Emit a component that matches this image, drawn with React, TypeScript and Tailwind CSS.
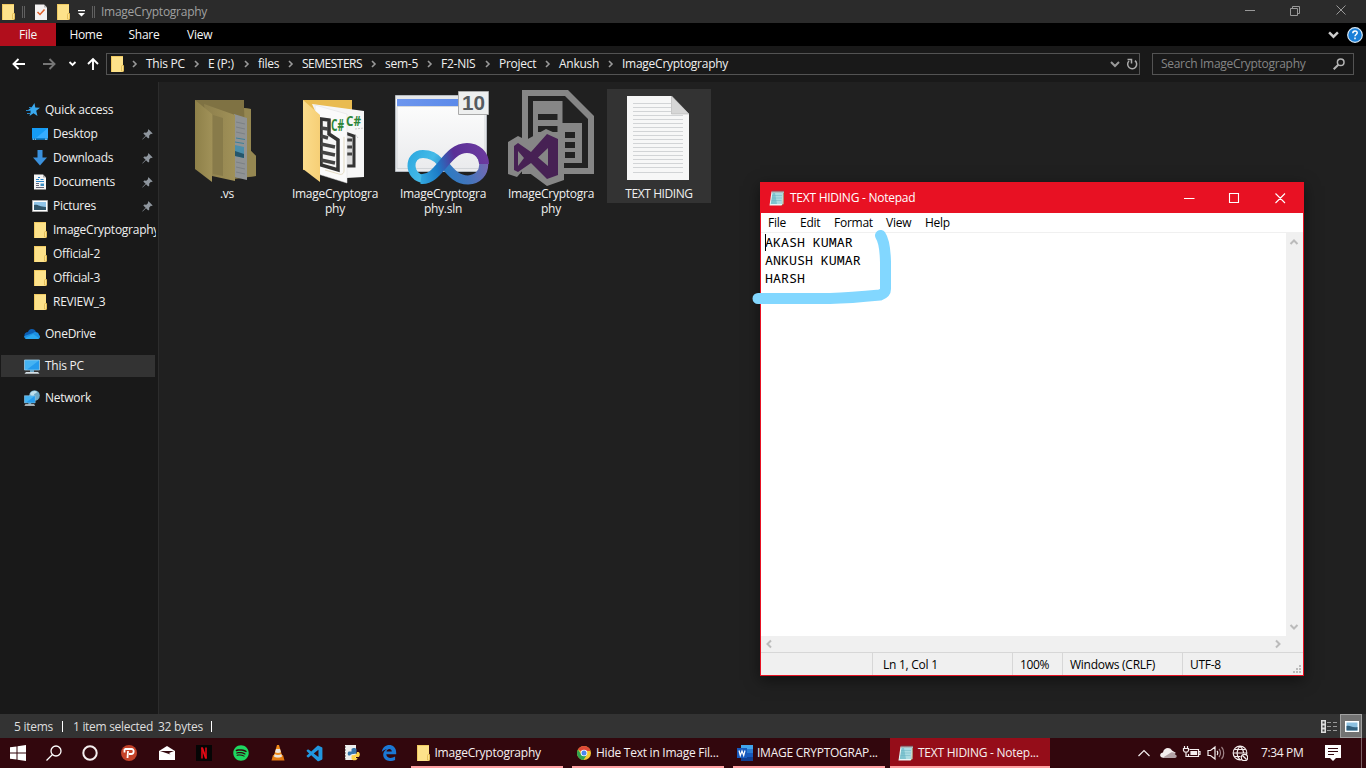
import type { ReactNode } from "react";
import { FaSpotify } from "react-icons/fa";
import { BiLogoVisualStudio } from "react-icons/bi";

function Folder({ className = "" }: { className?: string }) {
  return (
    <svg className={`h-4 w-[13px] shrink-0 ${className}`} viewBox="0 0 13 16">
      <path d="M0 0h12v16H0z" fill="#fde28a" />
      <path d="M0 0h12v1H1v15H0z" fill="#f0ca62" />
      <path d="M0 15h13V9.500l-1.500-.5-1.200 1.800V15z" fill="#f5cf60" />
      <path d="M10.500 15v-4.500l1-1.500 1 1v5.500z" fill="#fbe394" stroke="#d9ad3f" strokeWidth=".6" />
    </svg>
  );
}

function Chevron({ className = "", d, w = 1.300 }: { className?: string; d: string; w?: number }) {
  return (
    <svg className={`shrink-0 ${className}`} viewBox="0 0 10 10" fill="none" stroke="currentColor" strokeWidth={w}>
      <path d={d} />
    </svg>
  );
}

const DOWN = "M1 3l4 4 4-4";

function NotepadIcon() {
  return (
    <svg className="h-4 w-4 shrink-0" viewBox="0 0 16 16">
      <path d="M2.500 1.500h12.500l-.5 12.500-2 1.500H.5z" fill="#e8f4f4" />
      <path d="M3.500 3h10l-.8 11H1.700z" fill="#7fc4d0" />
      <path d="M6 3h7.500l-.8 11H8z" fill="#a9dbe2" />
      <path d="M3 5.500h10M3 8h10M2.500 10.500h10" stroke="#6bb3c2" strokeWidth=".5" />
      <path d="M4 .5v2.500M6 .5v2.500M8 .5v2.500M10 .5v2.500M12 .5v2.500M14 .5v2.500" stroke="#4f6a70" strokeWidth=".8" />
      <path d="M14.500 3l-.5 11-1.500 1.500" stroke="#8b7b50" strokeWidth=".8" fill="none" />
    </svg>
  );
}

function Pin() {
  return (
    <svg className="h-[11px] w-[11px]" viewBox="0 0 11 11" fill="#8f969e">
      <path d="M6.500.3 10.700 4.500l-1.200.5-.6-.2-1.800 1.900.2 1.900-1 1L4 7.200.7 10.600l-.5-.4L3.600 6.800 1.300 4.600l1-1 2 .2 1.800-1.900-.2-.8z" />
    </svg>
  );
}

const crumbs: [string, string][] = [
  ["This PC", "w-[62px]"],
  ["E (P:)", "w-[50px]"],
  ["files", "w-[44px]"],
  ["SEMESTERS", "w-[83px] tracking-[-0.5px]"],
  ["sem-5", "w-[56px]"],
  ["F2-NIS", "w-[58px]"],
  ["Project", "w-[60px]"],
  ["Ankush", "w-[63px]"],
];

function TitleBar() {
  return (
    <div className="flex h-[23px] items-center bg-[#2b2b2b] pl-[2px] text-[#a0a0a0]">
      <Folder />
      <div className="ml-[7px] h-3 w-[3px] border-x border-[#606060]" />
      <svg className="ml-[10px] h-4 w-3" viewBox="0 0 12 16">
        <path d="M0 .5h9l3 3V16H0z" fill="#f4f2f2" />
        <path d="M9 .5v3h3" fill="#bbb" />
        <path d="m2.500 8 2.500 2.500L9.500 5.500" stroke="#e0602a" strokeWidth="1.500" fill="none" />
      </svg>
      <Folder className="ml-[10px]" />
      <svg className="ml-2 mt-[3px] h-[7px] w-[7px]" viewBox="0 0 7 7" fill="#fff"><path d="M0 0h7v1.200H0zM0 3h7L3.500 6.500z" /></svg>
      <div className="ml-[7px] h-3 w-[3px] border-x border-[#606060]" />
      <span className="ml-[6px]">ImageCryptography</span>
      <svg className="ml-auto mb-[3px] mr-[19px] h-3 w-[102px]" viewBox="0 0 102 12" fill="none" stroke="#999">
        <path d="M0 6.500h10M45.500 4.500h7v7h-7zM47.500 4V2.500h7v7H53M91.500 1.500l9 9M100.500 1.500l-9 9" />
      </svg>
    </div>
  );
}

function Ribbon() {
  return (
    <div className="flex h-[23px] items-center bg-black text-[#f5f5f5]">
      <div className="flex h-full w-14 items-center justify-center bg-[#b10e1c]">File</div>
      <span className="w-[59px] pl-[13.500px] tracking-[-0.35px]">Home</span>
      <span className="w-[58px] pl-[13.500px]">Share</span>
      <span className="pl-[14px]">View</span>
      <Chevron d={DOWN} w={2.200} className="ml-auto h-[11px] w-[11px] text-[#ccc]" />
      <svg className="ml-2 mr-[3px] h-4 w-4" viewBox="0 0 16 16">
        <circle cx="8" cy="8" r="7.300" fill="#1a7fd8" stroke="#d5e7f5" strokeWidth="1.200" />
        <path d="M5.800 6.300c0-3.200 4.400-3 4.400-.5C10.200 7.500 8 7.500 8 9.300M8 10.600v1.700" stroke="#fff" strokeWidth="1.500" fill="none" />
      </svg>
    </div>
  );
}

function AddressRow() {
  return (
    <div className="flex h-9 items-center bg-[#191919] text-[#f0f0f0]">
      <svg className="h-4 w-[106px] shrink-0" viewBox="0 0 106 16" fill="none" strokeWidth="1.900" stroke="#fff">
        <path d="M13.500 8H25M18.500 3l-5 5 5 5" />
        <path d="M43 8h11.500M49.500 3l5 5-5 5" stroke="#777" />
        <path d="m69.500 6 3 3 3-3" strokeWidth="1.800" />
        <path d="M93 14V3M88 8l5-5 5 5" />
      </svg>
      <div className="flex h-[22px] w-[1034px] items-center border border-[#535353] pl-1">
        <Folder />
        <Chevron className="ml-[6px] mr-[6px] h-[10px] w-[10px] text-[#999]" d="M3 2l3 3-3 3" w={1.600} />
        {crumbs.map(([name, cls]) => (
          <div key={name} className={`flex shrink-0 items-center justify-between whitespace-nowrap pr-[6px] ${cls}`}>
            {name}
            <Chevron className="h-[10px] w-[10px] text-[#999]" d="M3 2l3 3-3 3" w={1.600} />
          </div>
        ))}
        <span>ImageCryptography</span>
        <Chevron d={DOWN} w={2} className="ml-auto h-[10px] w-[10px] text-[#999]" />
        <svg className="ml-[6px] mr-[1px] h-3 w-3" viewBox="0 0 12 12" fill="none" stroke="#aaa" strokeWidth="1.500">
          <path d="M9 2.700A4.500 4.500 0 1 1 3 3M1.500 1.500h4v4" />
        </svg>
      </div>
      <div className="ml-3 flex h-[22px] w-[202px] items-center border border-[#535353] pl-2 text-[#858585] tracking-[-0.3px]">
        Search ImageCryptography
        <svg className="ml-auto mr-2 h-3 w-3" viewBox="0 0 12 12" fill="none" stroke="#b5b5b5">
          <circle cx="7.700" cy="4.300" r="3.300" strokeWidth="1.500" />
          <path d="M5.300 6.700.7 11.300" strokeWidth="2" />
        </svg>
      </div>
    </div>
  );
}

function SideRow({ icon, label, pinned, className = "" }: { icon: ReactNode; label: string; pinned?: boolean; className?: string }) {
  return (
    <div className={`flex h-6 w-[156px] items-center overflow-hidden whitespace-nowrap ${className}`}>
      <span className="mr-[5px] flex w-4 shrink-0 justify-center">{icon}</span>
      <span>{label}</span>
      {pinned && <span className="ml-auto mr-[3px]"><Pin /></span>}
    </div>
  );
}

function Monitor() {
  return (
    <>
      <path d="M.5 1h15v10H.5z" fill="#45b3f2" stroke="#9ac9e4" strokeWidth=".8" />
      <path d="M15 1.500v9H3z" fill="#259bed" />
      <path d="M6 11h4v2H6z" fill="#6da8c8" />
      <path d="M2 13h12l1.500 1.800H.5z" fill="#d5dfe5" />
    </>
  );
}

function Sidebar() {
  return (
    <aside className="flex w-[159px] shrink-0 flex-col border-r border-[#2c2c2c] bg-[#191919] pt-4 text-[#f0f0f0]">
      <SideRow className="pl-6" label="Quick access" icon={
        <svg className="ml-px h-[14px] w-[14px]" viewBox="0 0 14 14"><path d="m8.500 0 .8 4.500 4.700.2-3.800 3 1.300 5.300-4-2.700L3.500 13l1.300-4.500L2 7l3.500-2.500z" fill="#3aa9ee" /><path d="M3 4.500h3M0 7.500h5M1 10.500h3" stroke="#2586c9" strokeWidth="1.200" /></svg>
      } />
      <SideRow className="pl-8" label="Desktop" pinned icon={
        <svg className="h-4 w-4" viewBox="0 0 16 16"><path d="M0 2h16v12H0z" fill="#159cf5" /><path d="M16 2v10H4z" fill="#36adff" /><path d="M0 12.500h16V14H0z" fill="#0c67a5" /><path d="M1 13.200h1M3 13.200h1M13 13.200h2" stroke="#fff" strokeWidth=".7" /></svg>
      } />
      <SideRow className="pl-8" label="Downloads" pinned icon={
        <svg className="h-4 w-4" viewBox="0 0 16 16"><path d="M5.500 0h5v7.500H15L8 15.500 1 7.500h4.500z" fill="#3b91dd" /></svg>
      } />
      <SideRow className="pl-8" label="Documents" pinned icon={
        <svg className="h-4 w-4" viewBox="0 0 16 16"><path d="M2 .5h9L14 3.500V15.500H2z" fill="#f5f5f5" /><path d="M11 .5v3h3" fill="#aaa" /><path d="M6 3.500h2M4 5.500h3M8.500 5.500h3M4 7.500h8" stroke="#2b86c9" strokeWidth="1.200" /><path d="M4 9.500h3M4 11.500h3M4 13.500h8" stroke="#667" /><path d="M8.500 9.500h3.500v2.500H8.500z" fill="#3c8fc4" /></svg>
      } />
      <SideRow className="pl-8" label="Pictures" pinned icon={
        <svg className="h-4 w-4" viewBox="0 0 16 16"><path d="M.5 2.500h15v11H.5z" fill="#fff" stroke="#aaa" /><path d="M2 4h12v8H2z" fill="#91c5e9" /><path d="M2 7c4-1 5 2 12 2v3H2z" fill="#31566b" /></svg>
      } />
      {["ImageCryptography", "Official-2", "Official-3", "REVIEW_3"].map((n) => (
        <SideRow key={n} className="pl-8" label={n} icon={<Folder />} />
      ))}
      <SideRow className="mt-2 pl-6" label="OneDrive" icon={
        <svg className="h-4 w-4" viewBox="0 0 16 16"><path d="M4 6c1-4 7-4 8 .3L8 11 1 11C-.5 9 1 6 4 6z" fill="#0d5fb4" /><path d="M9 7c2-2 6-.5 6 2 2 1 1 4-1 4H3C1 13-.3 11.500.3 10z" fill="#1c8fe3" /><path d="M1 12.300 9 8l6 4c-.3.700-1 1-2 1H3c-1 0-1.500-.2-2-.7z" fill="#2ba8f0" /></svg>
      } />
      <div className="mt-2 flex h-6 items-center">
        <div className="ml-px flex h-[22px] w-[154px] items-center bg-[#333]">
          <SideRow className="pl-[23px]" label="This PC" icon={<svg className="mt-px h-4 w-4" viewBox="0 0 16 16"><Monitor /></svg>} />
        </div>
      </div>
      <SideRow className="mt-2 pl-6" label="Network" icon={
        <svg className="h-4 w-4" viewBox="0 0 16 16"><circle cx="10.500" cy="5.500" r="5.300" fill="#6fa9c6" /><path d="M6 4c2-4 6-3 7-2-1 2-3 1-3 3s-3 1-4-1z" fill="#bfe0ec" /><g transform="translate(0 5) scale(.72)"><Monitor /></g></svg>
      } />
    </aside>
  );
}

function VsFolderIcon() {
  return (
    <svg className="h-[97px] w-full" viewBox="175 89 104 97">
      <defs>
        <linearGradient id="dimFlap"><stop stopColor="#8e8049" /><stop offset="1" stopColor="#a09158" /></linearGradient>
        <linearGradient id="dimFlap2"><stop stopColor="#8d7f4c" /><stop offset="1" stopColor="#a09158" /></linearGradient>
      </defs>
      <path d="M195 100h49v8l7 1v42l5 5v20l-21 3-40-10z" fill="#7f7243" />
      <path d="M244 108l7 1v42l5 5v20l-9 1z" fill="#958751" />
      <path d="m234 114 13 4v62l-13-3z" fill="#909394" />
      <path d="m236 122 9 2M236 127l9 2M236 132l9 2M236 162l9 2M236 167l9 2M236 172l9 2" stroke="#71797d" strokeWidth=".7" />
      <path d="m236 138 9 1.500M235 142l9 1.500" stroke="#3d7f98" />
      <path d="m235 145 9 2v11l-9-2z" fill="#4c8eaa" /><path d="m235 151 9 3v4l-9-2z" fill="#25566b" />
      <path d="m204 104 31 11v66l-23-5z" fill="url(#dimFlap2)" />
      <path d="m213 115 10 3v58l-10-2z" fill="#887b4a" />
      <path d="m195 100 17 14v68l-17-13z" fill="url(#dimFlap)" />
    </svg>
  );
}

function CSharpFolderIcon() {
  return (
    <svg className="h-[97px] w-full font-['Open_Sans',sans-serif] tracking-normal" viewBox="283 89 104 97">
      <defs>
        <linearGradient id="flap"><stop stopColor="#fbdc8c" /><stop offset="1" stopColor="#f6cf76" /></linearGradient>
      </defs>
      <path d="M303 100h49v70h-49z" fill="#e9bb50" />
      <path d="m312 104 52 7v66l-18 1z" fill="#f6f6f6" />
      <path d="m345 133 9 3v30h-12" stroke="#333" strokeWidth="3" fill="#ddd" />
      <path d="M345 140h7M345 147h7M345 154h7" stroke="#444" strokeWidth="3" />
      <path d="m315 105 32 9v69l-29-9z" fill="#fafafa" stroke="#ddd" strokeWidth=".5" />
      <path d="m321 119 8 1v14l9 6v30l-17-5z" fill="#f5f5f5" stroke="#333" strokeWidth="3.500" />
      <path d="m321 128 7 1M321 136l7 2M321 144l14 3M321 152l14 3M321 160l14 3" stroke="#444" strokeWidth="3.500" />
      <path d="M344 136v35c0 3-3 4-5 3l-14-4" fill="none" stroke="#d5c7a0" strokeWidth=".6" />
      <path d="m331 116 15 2v19l-10-1-5-5z" fill="#fafafa" />
      <text x="331" y="131" fontSize="16" fontWeight="700" fill="#2d8639" textLength="13" lengthAdjust="spacingAndGlyphs">C#</text>
      <text x="346" y="126" fontSize="15" fontWeight="700" fill="#2d8639" textLength="15" lengthAdjust="spacingAndGlyphs">C#</text>
      <path d="m355 129 9-1M355 134l3 4" stroke="#aaa" strokeDasharray="2 1" fill="none" strokeWidth=".6" />
      <path d="m303 100 17 15v67l-17-13z" fill="url(#flap)" />
    </svg>
  );
}

function SolutionIcon() {
  return (
    <svg className="h-[97px] w-full tracking-normal" viewBox="391 89 104 97">
      <defs>
        <linearGradient id="bar"><stop stopColor="#6d96ee" /><stop offset="1" stopColor="#5585e8" /></linearGradient>
        <linearGradient id="pane" x2="0" y2="1"><stop stopColor="#fff" /><stop offset="1" stopColor="#e9eaec" /></linearGradient>
        <linearGradient id="cyanLoop" gradientUnits="userSpaceOnUse" x1="407" y1="152" x2="452" y2="176"><stop stopColor="#2ba6de" /><stop offset=".5" stopColor="#45bbe8" /><stop offset="1" stopColor="#1b68b5" /></linearGradient>
        <linearGradient id="rise" gradientUnits="userSpaceOnUse" x1="412" y1="180" x2="488" y2="160"><stop stopColor="#3bb9e8" /><stop offset=".35" stopColor="#1c7cc8" /><stop offset=".6" stopColor="#5a2f96" /><stop offset="1" stopColor="#6c3a9f" /></linearGradient>
        <linearGradient id="violetLoop" gradientUnits="userSpaceOnUse" x1="446" y1="176" x2="488" y2="160"><stop stopColor="#2a7cc4" /><stop offset=".5" stopColor="#4874bb" /><stop offset="1" stopColor="#7a67b2" /></linearGradient>
      </defs>
      <path d="M395.500 95.500h91v76h-91z" fill="url(#pane)" stroke="#b4b9bf" />
      <path d="M396 96h90v3h-90z" fill="#e5e7e9" />
      <path d="M397 99h88v7h-88z" fill="url(#bar)" />
      <path d="M397 106.500h88v62h-88z" fill="none" stroke="#c7cbd0" strokeWidth=".7" />
      <path d="M440 162c-5-6-11-8-17-8-16 0-15 24 1 25" fill="none" stroke="url(#cyanLoop)" strokeWidth="8" />
      <path d="M443 163c7 8 13 17 25 17 21-1 21-30 0-32" fill="none" stroke="url(#violetLoop)" strokeWidth="9" />
      <path d="M421 179c18 2 25-31 46-31 10 0 17 7 17 16" fill="none" stroke="url(#rise)" strokeWidth="10" />
      <path d="M458.500 91.500h30v23h-30z" fill="#eeefef" stroke="#aaa" />
      <text x="462" y="110" fontSize="20" fontWeight="700" fill="#555b60" textLength="23" lengthAdjust="spacingAndGlyphs" className="font-['Liberation_Sans',sans-serif]">10</text>
    </svg>
  );
}

function VisualStudioIcon() {
  return (
    <svg className="h-[97px] w-full" viewBox="499 89 104 97">
      <path d="M522 90h46l26 26v58h-72z" fill="#868686" />
      <path d="M528 96h37l23 23v49h-60z" fill="#222" />
      <path d="M533 101h29.500v22H582v40h-49z" fill="#868686" />
      <path d="M538 114h19.500v6H538zM538 126h19.500v6H538zM565 132h10v6h-10zM565 142h10v6h-10zM565 152h10v6h-10zM560 163h5v5h-5z" fill="#222" />
      <path d="m508 142 10-6 8 4 20-11 18 8v43l-17 6-23-17-7 8-9-3z" fill="#868686" />
      <path fillRule="evenodd" d="m514 146 4-3 13 9 16-18 11 5v36l-11 4-16-16-13 9-4-2zM518 151v15l6-8zM548 148l-10 9.500 10 8.500z" fill="#472154" />
    </svg>
  );
}

function TextFileIcon() {
  return (
    <svg className="h-[97px] w-full" viewBox="607 89 104 97">
      <path d="M627 96h44.500L689 114v66h-62z" fill="#f7f7f7" />
      <path d="M633 103.500h38M633 107.500h38M633 111.500h38M633 115.500h50M633 119.500h50M633 123.500h50M633 127.500h50M633 131.500h50M633 135.500h50M633 139.500h50M633 143.500h50M633 147.500h50M633 151.500h50M633 155.500h50M633 159.500h50M633 163.500h50M633 167.500h50M633 172.500h50" stroke="#d2d4d6" />
      <path d="M671.500 96 689 114h-17.500z" fill="#d6d6d6" stroke="#b9b9b9" strokeWidth=".7" />
    </svg>
  );
}

const files: { icon: ReactNode; lines: string[]; selected?: boolean }[] = [
  { icon: <VsFolderIcon />, lines: [".vs"] },
  { icon: <CSharpFolderIcon />, lines: ["ImageCryptogra", "phy"] },
  { icon: <SolutionIcon />, lines: ["ImageCryptogra", "phy.sln"] },
  { icon: <VisualStudioIcon />, lines: ["ImageCryptogra", "phy"] },
  { icon: <TextFileIcon />, lines: ["TEXT HIDING"], selected: true },
];

function FileGrid() {
  return (
    <main className="flex flex-1 items-start gap-1 bg-[#202020] pl-4 pt-[7px] text-[#f0f0f0]">
      {files.map((f, i) => (
        <div key={i} className={`flex w-[104px] flex-col items-center pb-[2px] leading-[15px] ${f.selected ? "bg-[#333] tracking-[-0.42px]" : ""}`}>
          {f.icon}
          {f.lines.map((l) => <span key={l}>{l}</span>)}
        </div>
      ))}
    </main>
  );
}

function StatusBar() {
  return (
    <div className="flex h-6 items-center bg-[#333] pl-[14px] text-[#dedede]">
      <span className="w-[48px] shrink-0 pt-px">5 items</span>
      <i className="h-[11px] w-px bg-white" />
      <span className="w-[95px] shrink-0 whitespace-nowrap pl-[10px] pt-px tracking-[-0.3px]">1 item selected</span>
      <span className="w-[53px] shrink-0 whitespace-nowrap pt-px">32 bytes</span>
      <i className="h-[11px] w-px bg-white" />
      <svg className="ml-auto mr-[3px] h-[13px] w-4" viewBox="0 0 16 13" fill="none">
        <path d="M0 0h5v13H0z" fill="#ddd" />
        <path d="M1.500 1.500h2v2h-2zM1.500 5.500h2v2h-2zM1.500 9.500h2v2h-2z" fill="#444" />
        <path d="M6 2.500h4M12 2.500h4M6 6.500h4M12 6.500h4M6 10.500h4M12 10.500h4" stroke="#999" />
      </svg>
      <div className="mr-1 flex h-6 w-[22px] items-center justify-center border border-[#a0a0a0] bg-[#737373]">
        <svg className="ml-px h-[11px] w-[14px]" viewBox="0 0 14 11"><path d="M0 0h14v11H0z" fill="#fff" /><path d="M1.500 1.500h11v8h-11z" fill="#8cc0e0" /><path d="M1.500 5c4-1 5 2 11 1v3.500h-11z" fill="#315f7c" /></svg>
      </div>
    </div>
  );
}

function Notepad() {
  return (
    <section className="absolute left-[760px] top-[182px] flex h-[494px] w-[544px] flex-col border border-[#e81123] bg-white text-black shadow-[0_4px_14px_rgba(0,0,0,0.5)]">
      <div className="flex h-[30px] items-center bg-[#e81123] pl-2 text-white">
        <NotepadIcon />
        <span className="ml-[5px]">TEXT HIDING - Notepad</span>
        <svg className="ml-auto mr-[17px] h-[11px] w-[102px]" viewBox="0 0 102 11" fill="none" stroke="#fff" strokeWidth="1.100">
          <path d="M0 5.500h10.500M45.500.5h9v9h-9zM91.500.5l9.500 9.500M101 .5 91.500 10" />
        </svg>
      </div>
      <div className="flex h-5 items-center border-b border-[#f0f0f0]">
        <span className="w-[39px] pl-[7px]">File</span>
        <span className="w-[34px]">Edit</span>
        <span className="w-[52px]">Format</span>
        <span className="w-[39px]">View</span>
        <span>Help</span>
      </div>
      <div className="flex flex-1">
        <div className="relative flex-1 whitespace-pre pl-1 font-['Noto_Sans_Mono','DejaVu_Sans_Mono',monospace] text-[13.300px] leading-[18px] tracking-normal">
          <div>AKASH KUMAR</div>
          <div>ANKUSH KUMAR</div>
          <div>HARSH</div>
          <i className="absolute left-[4px] top-[1px] h-[17px] w-px bg-black" />
        </div>
        <div className="flex w-[17px] flex-col items-center justify-between bg-[#f0f0f0] py-[4px] pr-px text-[#bbb]">
          <Chevron d="M1.500 7 5 3.500 8.500 7" w={2} className="h-[10px] w-[10px]" />
          <Chevron d="M1.500 3 5 6.500 8.500 3" w={2} className="h-[10px] w-[10px]" />
        </div>
      </div>
      <div className="flex h-4 items-center justify-between bg-[#f0f0f0] pl-[3px] pr-[20px] text-[#bbb]">
        <Chevron d="M7 1.500 3.500 5 7 8.500" w={2} className="h-[10px] w-[10px]" />
        <Chevron d="M3 1.500 6.500 5 3 8.500" w={2} className="h-[10px] w-[10px]" />
      </div>
      <div className="flex h-[23px] items-center whitespace-nowrap border-t border-[#d7d7d7] bg-[#f0f0f0]">
        <div className="h-full w-[112px] border-r border-[#d7d7d7]" />
        <div className="flex h-full w-[140px] items-center border-r border-[#d7d7d7] pl-[10px] pt-[2px]">Ln 1, Col 1</div>
        <div className="flex h-full w-[50px] items-center border-r border-[#d7d7d7] pl-[7px] pt-[2px] tracking-[-0.4px]">100%</div>
        <div className="flex h-full w-[120px] items-center border-r border-[#d7d7d7] pl-[7px] pt-[2px]">Windows (CRLF)</div>
        <div className="pl-[7px] pt-[2px]">UTF-8</div>
        <svg className="mb-[2px] ml-auto mr-[2px] mt-auto h-2 w-2" viewBox="0 0 8 8" fill="#bbb"><path d="M6 0h2v2H6zM3 3h2v2H3zM6 3h2v2H6zM0 6h2v2H0zM3 6h2v2H3zM6 6h2v2H6z" /></svg>
      </div>
    </section>
  );
}

function Task({ icon, label, className }: { icon: ReactNode; label: string; className: string }) {
  return (
    <div className={`flex h-full items-center whitespace-nowrap border-b-2 border-[#ffa0a2] pt-[1px] ${className}`}>
      {icon}
      <span>{label}</span>
    </div>
  );
}

function Launcher({ children }: { children: ReactNode }) {
  return <div className="flex w-[37px] shrink-0 justify-center">{children}</div>;
}

function Taskbar() {
  return (
    <footer className="flex h-[30px] items-center bg-[#32070d] text-[#f7f0f0]">
      <div className="flex h-full w-[411px] shrink-0 items-center">
        <div className="flex w-9 shrink-0 justify-center">
          <svg className="h-4 w-4" viewBox="0 0 16 16" fill="#fff"><path d="M0 2.300 6.500 1.400V7.500H0zM7.500 1.200 16 0v7.500H7.500zM0 8.500h6.500v6.100L0 13.700zM7.500 8.500H16V16l-8.500-1.200z" /></svg>
        </div>
        <div className="flex w-9 shrink-0 justify-center">
          <svg className="h-4 w-4" viewBox="0 0 16 16" fill="none" stroke="#fff" strokeWidth="1.300"><circle cx="10" cy="6" r="5" /><path d="M6.500 9.500.5 15.500" /></svg>
        </div>
        <div className="flex w-9 shrink-0 justify-center">
          <svg className="h-4 w-4" viewBox="0 0 16 16" fill="none" stroke="#f4eeee" strokeWidth="2"><circle cx="8" cy="8" r="6.700" /></svg>
        </div>
        <div className="flex w-[40px] shrink-0 justify-center pl-[2px]">
          <svg className="h-4 w-4" viewBox="0 0 16 16"><circle cx="8" cy="8" r="8" fill="#c5432a" /><path d="M3.500 4v3.500M3.500 4h7c3 0 2.800 5-.2 5H8M7 6l-.5 7" fill="none" stroke="#fff" strokeWidth="1.800" /></svg>
        </div>
        <Launcher><svg className="h-[14px] w-4" viewBox="0 0 16 14"><path d="M0 5 8 0l8 5v9H0z" fill="#fff" /><path d="m1 5 14 0-5 2 1.500 1.500z" fill="#32070d" /></svg></Launcher>
        <Launcher><svg className="h-4 w-4" viewBox="0 0 16 16"><path d="M0 0h16v16H0z" fill="#050505" /><path d="M5 2.500h2v11H5zM9 2.500h2v11H9z" fill="#b20710" /><path d="M5 2.500h2l4 11H9z" fill="#e50914" /></svg></Launcher>
        <Launcher><FaSpotify className="h-4 w-4 text-[#1ed760]" /></Launcher>
        <Launcher>
          <svg className="h-4 w-4" viewBox="0 0 16 16"><path d="m3 10-1.500 5.500h13L13 10z" fill="#e27a13" /><path d="m7 0-3.500 12c2 1.500 7 1.500 9 0L9 0z" fill="#f08a18" /><path d="m6 4-1 3.300c2 1 4 1 6 0L10 4zM4.600 9 4 11.500c2 1.300 6 1.300 8 0L11.400 9c-2 1.200-5 1.200-6.800 0z" fill="#e9e5df" /></svg>
        </Launcher>
        <Launcher><BiLogoVisualStudio className="h-[19px] w-[19px] text-[#2196df]" /></Launcher>
        <Launcher>
          <svg className="h-4 w-4" viewBox="0 0 16 16"><path d="M1 0h11v15H1z" fill="#eee" /><path d="M1 2h1M1 5h1M1 8h1M1 11h1M1 14h1" stroke="#555" /><path d="M7.500 7V4.500c0-2 5-2 5 0V8c0 1.500-5 0-6.500 2.500H4.500C3 9 4 6.500 5 6.500h5" fill="#3775a9" /><path d="M13 7h1.500c2 1 1.500 4.500 0 5h-3v1h2c0 3-6 3-6 .5V11c0-1.500 5.500 0 5.500-4z" fill="#ffd447" /></svg>
        </Launcher>
        <Launcher>
          <svg className="h-4 w-4" viewBox="0 0 16 16"><path fillRule="evenodd" d="M.8 7.200C1.800-2.200 15.200-2.500 15.200 7.700v1.600H5.300c.3 4.200 5.300 4.500 8.800 2.300v3.300C8.500 17.700 2 15 2.200 9.500 2.300 7 4 5.200 6 4.300 3.700 4.500 1.800 5.500.8 7.200zM5.500 6.600h5.300C10.800 3.100 6 3.300 5.500 6.600z" fill="#1b78d5" /></svg>
        </Launcher>
      </div>
      <Task className="w-[152px] pl-[6px] tracking-[-0.25px]" label="ImageCryptography" icon={<Folder className="mr-[4.500px]" />} />
      <Task className="ml-[9px] w-[152px] pl-[5px] tracking-[-0.25px]" label="Hide Text in Image Fil..." icon={
        <svg className="mr-[5px] h-[14px] w-[14px] shrink-0" viewBox="0 0 14 14"><circle cx="7" cy="7" r="7" fill="#f4c631" /><path d="M7 7 .94 3.500A7 7 0 0 1 13.060 3.500L13.060 5H7z" fill="#df4937" /><path d="M.94 3.500A7 7 0 0 0 6.500 14l3.500-5.500L4 8z" fill="#2da44f" /><circle cx="7" cy="7" r="3.300" fill="#fff" /><circle cx="7" cy="7" r="2.500" fill="#4a86ed" /></svg>
      } />
      <Task className="ml-[9px] w-[152px] pl-1 tracking-[-0.25px]" label="IMAGE CRYPTOGRAP..." icon={
        <svg className="mr-1 h-4 w-4 shrink-0" viewBox="0 0 16 16"><path d="M4 0h12v16H4z" fill="#2b7cd3" /><path d="M4 0h12v4H4z" fill="#41a5ee" /><path d="M4 8h12v4H4z" fill="#185abd" /><path d="M4 12h12v4H4z" fill="#103f91" /><path d="M0 3h10v10H0z" fill="#185abd" /><path d="m2 5.500 1.300 5L5 6l1.700 4.500L8 5.500" stroke="#fff" strokeWidth="1.200" fill="none" /></svg>
      } />
      <Task className="ml-[5px] w-[160px] bg-[#950d19] pl-2 tracking-[-0.25px]" label="TEXT HIDING - Notep..." icon={<span className="mr-1"><NotepadIcon /></span>} />
      <svg className="ml-[88px] h-4 w-[110px] shrink-0" viewBox="0 0 110 16" fill="none" stroke="#f4eeee" strokeWidth="1.200">
        <path d="m.5 11 5.500-5.500 5.500 5.500" />
        <path d="M24 12.500c-3-1-2-5 1-5 .5-5 7-6 9-2L38 8l-12 5z" fill="#f4eeee" stroke="none" />
        <path d="m25 12.500 8-5c3-1 4 1 4 2 2.500.5 2 3.500 0 3.500H27z" fill="#b3a3a6" stroke="none" />
        <path d="M51.500 4.500H60.500v7H50.500v-2.500M61 6.500h1v3h-1M46.500 1v3M49.500 1v3M45.500 3.500h5v2l-1 1.500h-3l-1-1.500zM48 7v4.500h2.500" />
        <path d="M53 6.500h5.500v3H53z" fill="#f4eeee" />
        <path d="M70 5.500h2.500L77 2v12l-4.500-3.500H70zM79 6c1 1 1 3 0 4" />
        <path d="M81 4c2 2 2 6 0 8M83.500 2c3 3 3 9 0 12" stroke="#a08589" />
        <circle cx="102" cy="8" r="6.800" /><path d="M95.500 8h13M102 1.200c-4 4-4 9.500 0 13.600M102 1.200c3 2.500 3.500 5 3.500 7M96.500 4.500h11M96.500 11.500h6" />
        <circle cx="106.500" cy="12.500" r="3.200" fill="#32070d" /><path d="m104.500 10.500 4 4" />
      </svg>
      <span className="ml-[13px] w-[48px] whitespace-nowrap tracking-[-0.35px]">7:34 PM</span>
      <svg className="ml-4 h-4 w-4" viewBox="0 0 16 16"><path d="M0 0h16v13h-5l-3 3-3-3H0z" fill="#fff" /><path d="M3 3.500h10M3 6.500h10M3 9.500h6" stroke="#32070d" strokeWidth="1.200" /></svg>
      <div className="ml-auto mr-1 h-full w-px bg-[#7b6064]" />
    </footer>
  );
}

export default function App() {
  return (
    <div className="relative flex h-[768px] w-[1366px] flex-col overflow-hidden bg-[#202020] font-['Open_Sans','Noto_Sans',sans-serif] text-[12px] leading-4 tracking-[-0.26px]">
      <TitleBar />
      <Ribbon />
      <AddressRow />
      <div className="flex min-h-0 flex-1">
        <Sidebar />
        <FileGrid />
      </div>
      <StatusBar />
      <Taskbar />
      <Notepad />
      <svg className="pointer-events-none absolute left-[745px] top-[225px] h-[85px] w-[155px]" viewBox="745 225 155 85" fill="none" stroke="#82d7ff" strokeWidth="11" strokeLinecap="round" strokeLinejoin="round">
        <path d="M758 298.500H830C850 298 870 296 880 295Q885.500 293 885.500 289V262Q885 242 880.500 235.500" />
      </svg>
    </div>
  );
}
